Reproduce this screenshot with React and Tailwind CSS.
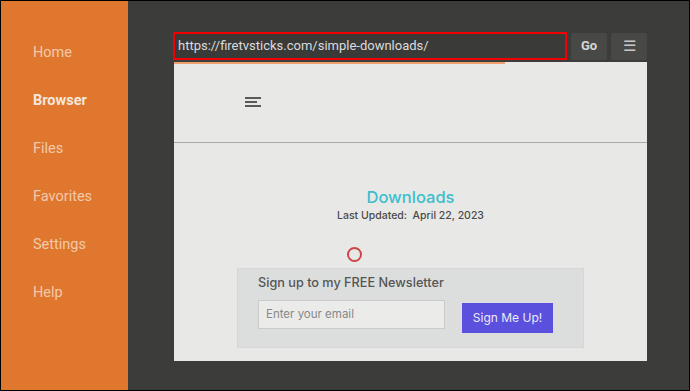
export default function App() {
  const nav = ["Home", "Browser", "Files", "Favorites", "Settings", "Help"];
  return (
    <div className="w-[690px] h-[391px] border border-black bg-[#3c3d3b] flex overflow-hidden" style={{ fontFamily: "Roboto, 'Noto Sans', sans-serif" }}>
      <div className="w-[127px] h-full bg-[#e0772f] flex flex-col pt-[28px] pl-[32px]">
        {nav.map((n) => (
          <div
            key={n}
            className={
              "h-[48px] flex items-center text-[14.5px] " +
              (n === "Browser" ? "font-bold text-[#f6e7dc]" : "text-[#f3c9aa]")
            }
          >
            {n}
          </div>
        ))}
      </div>
      <div className="flex-1 flex flex-col pl-[45px] pt-[31px]">
        <div className="flex items-center gap-[4px] h-[28px]">
          <div className="w-[394px] h-[28px] border-2 border-[#f00000] bg-[#3a3a38] flex items-center pl-[3px] text-[13px] text-[#dcdcdc]">
            https://firetvsticks.com/simple-downloads/
          </div>
          <div className="w-[36px] h-[27px] bg-[#484947] rounded-[2px] flex items-center justify-center text-[13px] font-bold text-[#d6d6d6]">
            Go
          </div>
          <div className="w-[36px] h-[27px] bg-[#484947] rounded-[2px] flex items-center justify-center text-[15px] text-[#c8c8c8]">
            ☰
          </div>
        </div>
        <div className="ml-[1px] mt-[2px] w-[473px] h-[299px] bg-[#e8e9e7] flex flex-col relative" style={{ fontFamily: "Inter, 'Noto Sans', sans-serif" }}>
          <div className="absolute left-0 top-0 w-[331px] h-[2px] bg-[#f0a070]" />
          <div className="h-[81px] border-b border-[#a9aaa8] pl-[71px] pt-[35px]">
            <svg width="17" height="10" viewBox="0 0 17 10">
              <rect x="0" y="0" width="16" height="2" fill="#5a5a5a" />
              <rect x="0" y="4" width="12" height="2" fill="#5a5a5a" />
              <rect x="0" y="8" width="16" height="2" fill="#5a5a5a" />
            </svg>
          </div>
          <div className="flex flex-col items-center pt-[43px]">
            <div className="text-[16.5px] leading-[22px] font-medium text-[#3dbdcd]">Downloads</div>
            <div className="text-[10.5px] leading-[14px] mt-[1px] font-medium text-[#4a4a4a]">
              Last Updated:&nbsp; April 22, 2023
            </div>
          </div>
          <div className="pl-[173px] mt-[24px]">
            <div className="w-[15px] h-[15px] rounded-full border-2 border-[#d04545]" />
          </div>
          <div className="ml-[63px] mt-[6px] w-[347px] h-[80px] bg-[#dcdedd] border border-[#d6d8d7] pl-[20px] pt-[6px]">
            <div className="text-[12.7px] leading-[16px] font-medium text-[#555]">Sign up to my FREE Newsletter</div>
            <div className="flex mt-[9px] items-start">
              <div className="w-[187px] h-[29px] bg-[#ebebea] border border-[#c9cac9] flex items-center pl-[7px] text-[11.5px] text-[#888]">
                Enter your email
              </div>
              <div className="ml-[17px] mt-[3px] w-[91px] h-[30px] bg-[#5a50dd] flex items-center justify-center text-[12px] text-[#ecebf8]">
                Sign Me Up!
              </div>
            </div>
          </div>
        </div>
      </div>
    </div>
  );
}
